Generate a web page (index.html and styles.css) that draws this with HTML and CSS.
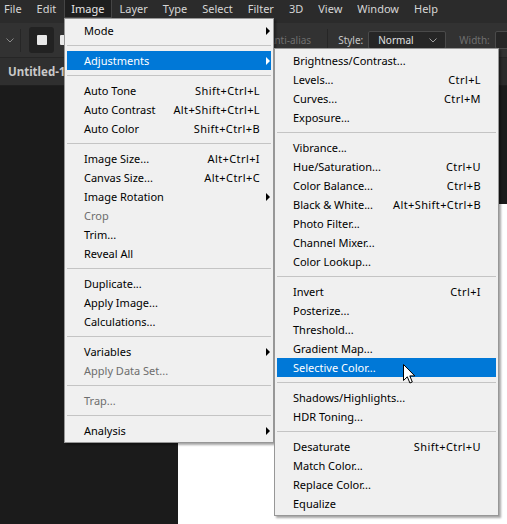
FILE: index.html
```html
<!DOCTYPE html>
<html lang="en">
<head>
    <meta charset="UTF-8">
    <title>Photoshop - Image &gt; Adjustments</title>
    <link rel="stylesheet" href="styles.css">
</head>
<body>
    <div class="app">
        <!-- Menu bar -->
        <nav class="menubar">
            <span class="menubar-item">File</span>
            <span class="menubar-item">Edit</span>
            <span class="menubar-item active">Image</span>
            <span class="menubar-item">Layer</span>
            <span class="menubar-item">Type</span>
            <span class="menubar-item">Select</span>
            <span class="menubar-item">Filter</span>
            <span class="menubar-item">3D</span>
            <span class="menubar-item">View</span>
            <span class="menubar-item">Window</span>
            <span class="menubar-item">Help</span>
        </nav>

        <!-- Options bar -->
        <div class="options">
            <svg class="chevron" width="8" height="5" viewBox="0 0 8 5"><path d="M0.5 0.5 L4 4 L7.5 0.5" fill="none" stroke="#8a8a8a" stroke-width="1"/></svg>
            <span class="divider"></span>
            <span class="tool-btn"><span class="tool-square"></span></span>
            <span class="tool-square loose"></span>
            <span class="hidden-group">
                <span class="opt-label">Feather:</span>
                <span class="field small">0 px</span>
            </span>
            <span class="opt-label dim">Anti-alias</span>
            <span class="divider"></span>
            <span class="opt-label">Style:</span>
            <span class="select">Normal
                <svg width="8" height="5" viewBox="0 0 8 5"><path d="M0.5 0.5 L4 4 L7.5 0.5" fill="none" stroke="#a0a0a0" stroke-width="1"/></svg>
            </span>
            <span class="opt-label dim">Width:</span>
            <span class="field"></span>
        </div>

        <!-- Document tabs -->
        <div class="tabs">
            <span class="tab">Untitled-1 <span class="tab-rest">@</span></span>
        </div>

        <!-- Workspace -->
        <div class="workspace">
            <div class="document"></div>
        </div>
    </div>

    <!-- Image menu -->
    <div class="menu menu-image">
        <div class="item"><span class="label">Mode</span><span class="arrow"></span></div>
        <div class="sep"></div>
        <div class="item hover"><span class="label">Adjustments</span><span class="arrow"></span></div>
        <div class="sep"></div>
        <div class="item"><span class="label">Auto Tone</span><span class="key">Shift+Ctrl+L</span><span class="arrow none"></span></div>
        <div class="item"><span class="label">Auto Contrast</span><span class="key">Alt+Shift+Ctrl+L</span><span class="arrow none"></span></div>
        <div class="item"><span class="label">Auto Color</span><span class="key">Shift+Ctrl+B</span><span class="arrow none"></span></div>
        <div class="sep"></div>
        <div class="item"><span class="label">Image Size...</span><span class="key">Alt+Ctrl+I</span><span class="arrow none"></span></div>
        <div class="item"><span class="label">Canvas Size...</span><span class="key">Alt+Ctrl+C</span><span class="arrow none"></span></div>
        <div class="item"><span class="label">Image Rotation</span><span class="arrow"></span></div>
        <div class="item disabled"><span class="label">Crop</span></div>
        <div class="item"><span class="label">Trim...</span></div>
        <div class="item"><span class="label">Reveal All</span></div>
        <div class="sep"></div>
        <div class="item"><span class="label">Duplicate...</span></div>
        <div class="item"><span class="label">Apply Image...</span></div>
        <div class="item"><span class="label">Calculations...</span></div>
        <div class="sep"></div>
        <div class="item"><span class="label">Variables</span><span class="arrow"></span></div>
        <div class="item disabled"><span class="label">Apply Data Set...</span></div>
        <div class="sep"></div>
        <div class="item disabled"><span class="label">Trap...</span></div>
        <div class="sep"></div>
        <div class="item"><span class="label">Analysis</span><span class="arrow"></span></div>
    </div>

    <!-- Adjustments submenu -->
    <div class="menu menu-adjust">
        <div class="item"><span class="label">Brightness/Contrast...</span></div>
        <div class="item"><span class="label">Levels...</span><span class="key">Ctrl+L</span></div>
        <div class="item"><span class="label">Curves...</span><span class="key">Ctrl+M</span></div>
        <div class="item"><span class="label">Exposure...</span></div>
        <div class="sep"></div>
        <div class="item"><span class="label">Vibrance...</span></div>
        <div class="item"><span class="label">Hue/Saturation...</span><span class="key">Ctrl+U</span></div>
        <div class="item"><span class="label">Color Balance...</span><span class="key">Ctrl+B</span></div>
        <div class="item"><span class="label">Black &amp; White...</span><span class="key">Alt+Shift+Ctrl+B</span></div>
        <div class="item"><span class="label">Photo Filter...</span></div>
        <div class="item"><span class="label">Channel Mixer...</span></div>
        <div class="item"><span class="label">Color Lookup...</span></div>
        <div class="sep"></div>
        <div class="item"><span class="label">Invert</span><span class="key">Ctrl+I</span></div>
        <div class="item"><span class="label">Posterize...</span></div>
        <div class="item"><span class="label">Threshold...</span></div>
        <div class="item"><span class="label">Gradient Map...</span></div>
        <div class="item hover"><span class="label">Selective Color...</span></div>
        <div class="sep"></div>
        <div class="item"><span class="label">Shadows/Highlights...</span></div>
        <div class="item"><span class="label">HDR Toning...</span></div>
        <div class="sep"></div>
        <div class="item"><span class="label">Desaturate</span><span class="key">Shift+Ctrl+U</span></div>
        <div class="item"><span class="label">Match Color...</span></div>
        <div class="item"><span class="label">Replace Color...</span></div>
        <div class="item"><span class="label">Equalize</span></div>
    </div>

    <!-- Mouse pointer -->
    <svg class="cursor" width="13" height="21" viewBox="0 0 13 21">
        <path d="M0.5 0.5 L0.5 16.5 L4.3 12.8 L6.9 19 L9.3 18 L6.8 11.9 L11.8 11.9 Z" fill="#fff" stroke="#000" stroke-width="1" stroke-linejoin="miter"/>
    </svg>
</body>
</html>
```

FILE: styles.css
```css
* {
    margin: 0;
    padding: 0;
    box-sizing: border-box;
}

body {
    width: 507px;
    height: 524px;
    overflow: hidden;
    position: relative;
    background-color: #1b1b1b;
    font-family: "Noto Sans", "Open Sans", sans-serif;
}

.app {
    display: flex;
    flex-direction: column;
    height: 100%;
}

/* Menu bar */
.menubar {
    height: 23px;
    display: flex;
    align-items: flex-start;
    background-color: #2b2b2b;
    color: #d6d6d6;
    font-size: 11px;
}

.menubar-item {
    height: 18px;
    line-height: 17px;
    padding: 0 6.5px;
    border: 1px solid transparent;
    border-top: none;
}

.menubar-item:first-child {
    padding-left: 3px;
}

.menubar-item.active {
    background-color: #1e1e1e;
    border-color: #454545;
    color: #e6e6e6;
}

/* Options bar */
.options {
    height: 35px;
    display: flex;
    align-items: center;
    background-color: #323232;
    border-bottom: 1px solid #262626;
    font-size: 10px;
    color: #c8c8c8;
}

.options > * {
    flex-shrink: 0;
}

.chevron {
    margin-left: 6px;
}

.divider {
    width: 1px;
    height: 23px;
    background-color: #262626;
    margin: 0 10px 0 6px;
}

.tool-btn {
    width: 25px;
    height: 26px;
    background-color: #222;
    border-radius: 3px;
    display: flex;
    align-items: center;
    justify-content: center;
    margin-left: -2px;
}

.tool-square {
    width: 10px;
    height: 10px;
    background-color: #e8e8e8;
    border-radius: 1px;
}

.tool-square.loose {
    margin-left: 6px;
}

.hidden-group {
    display: flex;
    align-items: center;
    width: 198px;
    gap: 6px;
    padding-left: 40px;
}

.opt-label.dim {
    color: #6f6f6f;
}

.field {
    width: 30px;
    height: 18px;
    border: 1px solid #4a4a4a;
    border-radius: 2px;
    background-color: #262626;
    margin-left: 5px;
}

.field.small {
    width: 40px;
    color: #ddd;
    padding-left: 4px;
    line-height: 16px;
}

.select {
    width: 78px;
    height: 18px;
    margin: 0 13px 0 5px;
    padding: 0 8px 0 9px;
    display: flex;
    align-items: center;
    justify-content: space-between;
    border: 1px solid #4a4a4a;
    border-radius: 2px;
    background-color: #262626;
    color: #e0e0e0;
}

.opt-label + .divider {
    margin-left: 16px;
}

/* Tabs */
.tabs {
    height: 28px;
    display: flex;
    background-color: #2b2b2b;
    border-bottom: 1px solid #1f1f1f;
}

.tab {
    padding: 0 12px 0 8px;
    line-height: 28px;
    font-size: 11.5px;
    font-weight: bold;
    color: #c9c9c9;
    background-color: #2f2f2f;
}

.tab-rest {
    font-weight: normal;
    color: #9a9a9a;
}

/* Workspace */
.workspace {
    flex: 1;
    background-color: #1b1b1b;
    padding: 118px 0 0 178px;
}

.document {
    height: 100%;
    background-color: #fff;
}

/* Drop-down menus */
.menu {
    position: absolute;
    background-color: #f0f0f0;
    border: 1px solid #979797;
    padding: 2px;
    box-shadow: 2px 2px 2px rgba(0, 0, 0, 0.35);
    font-size: 11px;
    color: #000;
}

.menu-image {
    left: 64px;
    top: 18px;
    width: 210px;
}

.menu-adjust {
    left: 274px;
    top: 48px;
    width: 225px;
}

.item {
    height: 19px;
    display: flex;
    align-items: center;
    white-space: nowrap;
}

.menu-image .item {
    padding-left: 17px;
}

.menu-adjust .item {
    padding: 0 15px 0 16px;
}

.label {
    flex: 1;
}

.key {
    letter-spacing: 0.4px;
}

.arrow {
    width: 11px;
    height: 8px;
    flex-shrink: 0;
    position: relative;
}

.arrow::after {
    content: "";
    position: absolute;
    left: 6px;
    top: 0;
    border-left: 4px solid #000;
    border-top: 4px solid transparent;
    border-bottom: 4px solid transparent;
}

.arrow.none::after {
    display: none;
}

.item.hover {
    background-color: #0078d7;
    color: #fff;
}

.item.hover .arrow::after {
    border-left-color: #fff;
}

.item.disabled {
    color: #6d6d6d;
}

.sep {
    height: 11px;
    padding-top: 5px;
}

.sep::before {
    content: "";
    display: block;
    height: 1px;
    background-color: #c4c4c4;
}

.cursor {
    position: absolute;
    left: 403px;
    top: 364px;
}
```
